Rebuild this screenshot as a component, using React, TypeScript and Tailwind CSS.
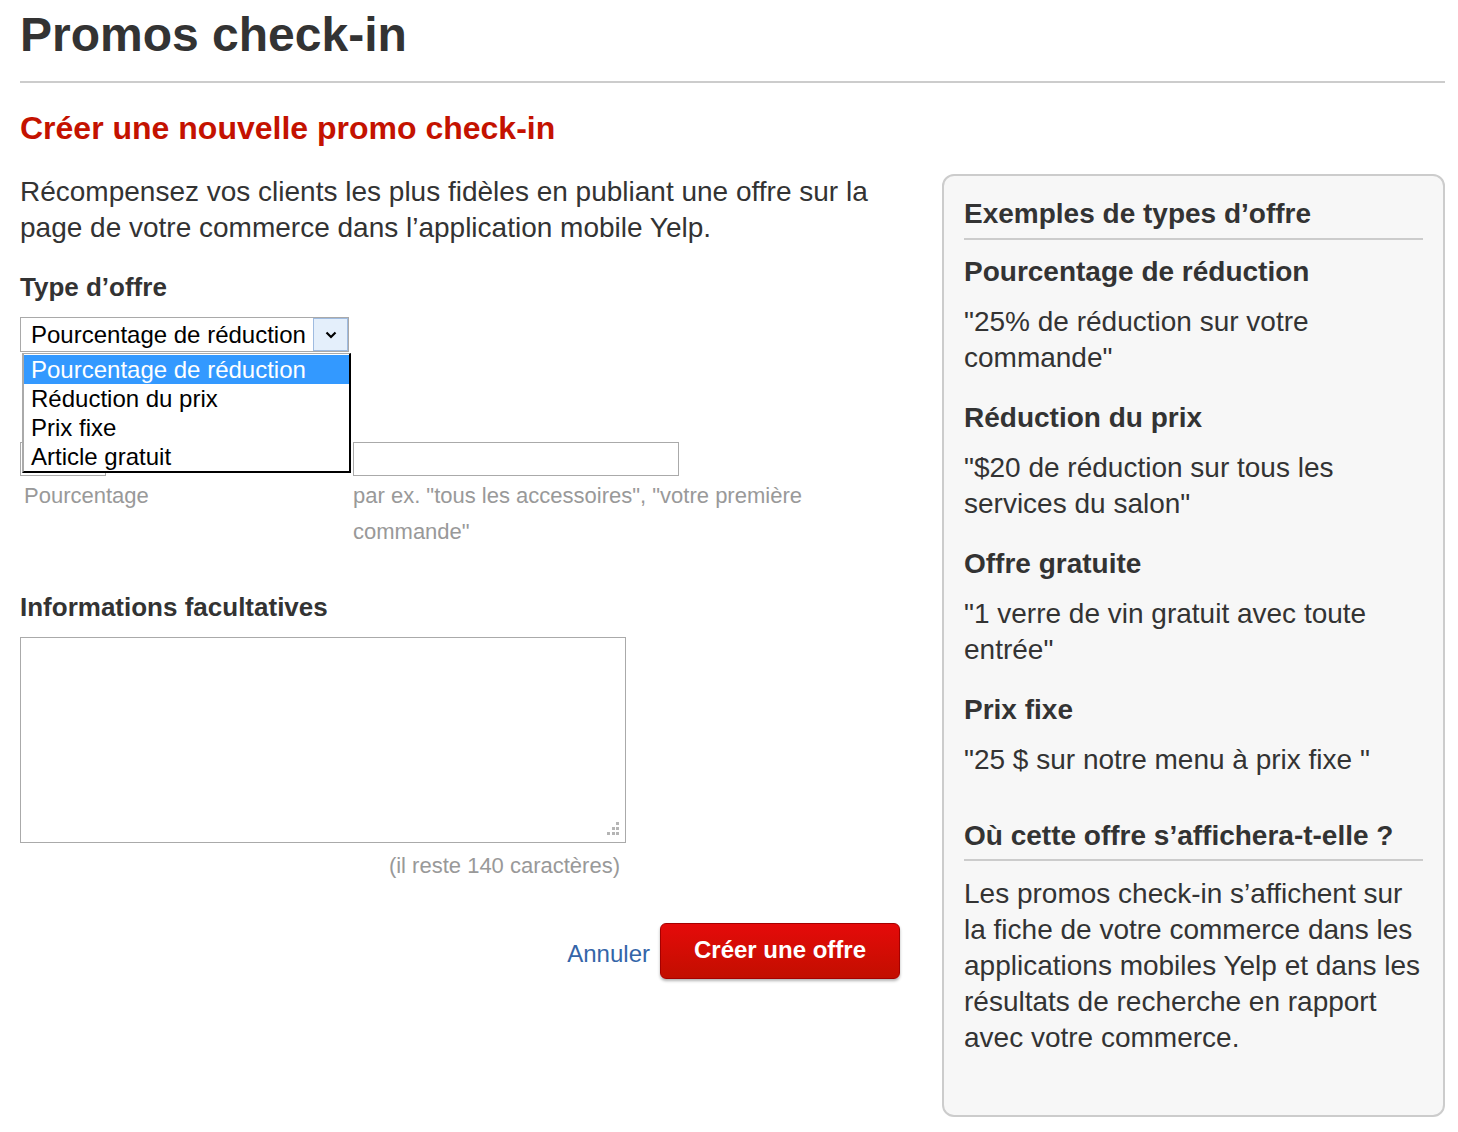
import React from "react";

const options = ["Pourcentage de réduction", "Réduction du prix", "Prix fixe", "Article gratuit"];

const examples = [
  { title: "Pourcentage de réduction", text: "\"25% de réduction sur votre commande\"" },
  { title: "Réduction du prix", text: "\"$20 de réduction sur tous les services du salon\"" },
  { title: "Offre gratuite", text: "\"1 verre de vin gratuit avec toute entrée\"" },
  { title: "Prix fixe", text: "\"25 $ sur notre menu à prix fixe \"" },
];

function OfferSelect() {
  return (
    <div className="relative mt-[14px] w-[329px]">
      <div className="flex h-[35px] border border-[#a9a9a9] bg-white">
        <div className="flex-1 pl-[10px] text-[24px] leading-[33px] text-black">Pourcentage de réduction</div>
        <div className="flex w-[35px] items-center justify-center border border-[#9fbbe0] bg-[#e4effb]">
          <svg width="12" height="8" viewBox="0 0 12 8">
            <path d="M1.5 1.5 L6 6 L10.5 1.5" fill="none" stroke="#000" strokeWidth="2.2" />
          </svg>
        </div>
      </div>
      {/* open list */}
      <div className="absolute left-[2px] top-[36px] z-10 w-[329px] border-b-2 border-l-2 border-r-2 border-t border-b-black border-l-[#aaaaaa] border-r-black border-t-[#aaaaaa] bg-white pt-px">
        {options.map((o, i) => (
          <div
            key={o}
            className={
              i === 0
                ? "h-[29px] bg-[#3399ff] pl-[7px] text-[24px] leading-[29px] text-white"
                : "h-[29px] pl-[7px] text-[24px] leading-[29px] text-black"
            }
          >
            {o}
          </div>
        ))}
      </div>
    </div>
  );
}

function Grip() {
  return (
    <svg className="pointer-events-none absolute bottom-[6px] right-[6px]" width="16" height="16" viewBox="0 0 16 16">
      <rect x="12" y="1" width="3" height="3" fill="#b5b5b5" />
      <rect x="8" y="6" width="3" height="3" fill="#b5b5b5" />
      <rect x="12" y="6" width="3" height="3" fill="#b5b5b5" />
      <rect x="3" y="11" width="3" height="3" fill="#b5b5b5" />
      <rect x="8" y="11" width="3" height="3" fill="#b5b5b5" />
      <rect x="12" y="11" width="3" height="3" fill="#b5b5b5" />
    </svg>
  );
}

export default function App() {
  return (
    <div className="min-h-[1132px] bg-white pl-[20px] pr-[13px] text-[#333] [font-family:'Liberation_Sans',Arial,sans-serif]">
      <h1 className="pt-[7px] text-[48px] font-bold leading-[56px] text-[#333]">Promos check-in</h1>
      <div className="mt-[18px] border-b-2 border-[#cccccc]" />

      <h2 className="mt-[25px] text-[32px] font-bold leading-[40px] text-[#c41200]">Créer une nouvelle promo check-in</h2>

      <div className="mt-[26px] flex justify-between">
        {/* left column */}
        <div className="w-[880px]">
          <p className="text-[28px] leading-[36px]">
            Récompensez vos clients les plus fidèles en publiant une offre sur la page de votre commerce dans l’application mobile Yelp.
          </p>

          <div className="mt-[25px] text-[26px] font-bold leading-[32px]">Type d’offre</div>
          <OfferSelect />

          <div className="mt-[90px] flex">
            <div className="w-[333px]">
              <div className="h-[34px] w-[86px] border border-[#aaaaaa] bg-white" />
              <div className="mt-[2px] pl-[4px] text-[22px] leading-[36px] text-[#999]">Pourcentage</div>
            </div>
            <div className="w-[460px]">
              <div className="h-[34px] w-[326px] border border-[#aaaaaa] bg-white" />
              <div className="mt-[2px] text-[22px] leading-[36px] text-[#999]">
                par ex. "tous les accessoires", "votre première commande"
              </div>
            </div>
          </div>

          <div className="mt-[41px] text-[26px] font-bold leading-[32px]">Informations facultatives</div>
          <div className="relative mt-[14px] h-[206px] w-[606px]">
            <textarea className="block h-full w-full resize-none border border-[#aaaaaa] bg-white outline-none" />
            <Grip />
          </div>
          <div className="mt-[9px] w-[606px] pr-[6px] text-right text-[22px] leading-[28px] text-[#999]">
            (il reste 140 caractères)
          </div>

          <div className="mt-[43px] flex items-center justify-end gap-[10px]">
            <a href="#" className="mt-[6px] text-[24px] leading-[30px] text-[#3465a8]">Annuler</a>
            <button
              type="button"
              className="h-[56px] w-[240px] rounded-[6px] border border-[#a50000] bg-gradient-to-b from-[#e50a0a] to-[#c20e00] pb-[2px] text-[24px] font-bold text-white shadow-[0_2px_3px_rgba(0,0,0,0.3)]"
            >
              Créer une offre
            </button>
          </div>
        </div>

        {/* right panel */}
        <div className="h-[943px] w-[503px] rounded-[12px] border-2 border-[#cccccc] bg-[#f7f7f7] pl-[20px] pr-[20px] pt-[20px]">
          <div className="text-[28px] font-bold leading-[36px]">Exemples de types d’offre</div>
          <div className="mt-[6px] border-b-2 border-[#cccccc]" />
          {examples.map((e, i) => (
            <div key={e.title} className={i === 0 ? "mt-[14px]" : "mt-[24px]"}>
              <div className="text-[28px] font-bold leading-[36px]">{e.title}</div>
              <p className="mt-[14px] text-[28px] leading-[36px]">{e.text}</p>
            </div>
          ))}
          <div className="mt-[40px] text-[28px] font-bold leading-[36px]">Où cette offre s’affichera-t-elle ?</div>
          <div className="mt-[5px] border-b-2 border-[#cccccc]" />
          <p className="mt-[15px] text-[28px] leading-[36px]">
            Les promos check-in s’affichent sur la fiche de votre commerce dans les applications mobiles Yelp et dans les résultats de recherche en rapport avec votre commerce.
          </p>
        </div>
      </div>
    </div>
  );
}
